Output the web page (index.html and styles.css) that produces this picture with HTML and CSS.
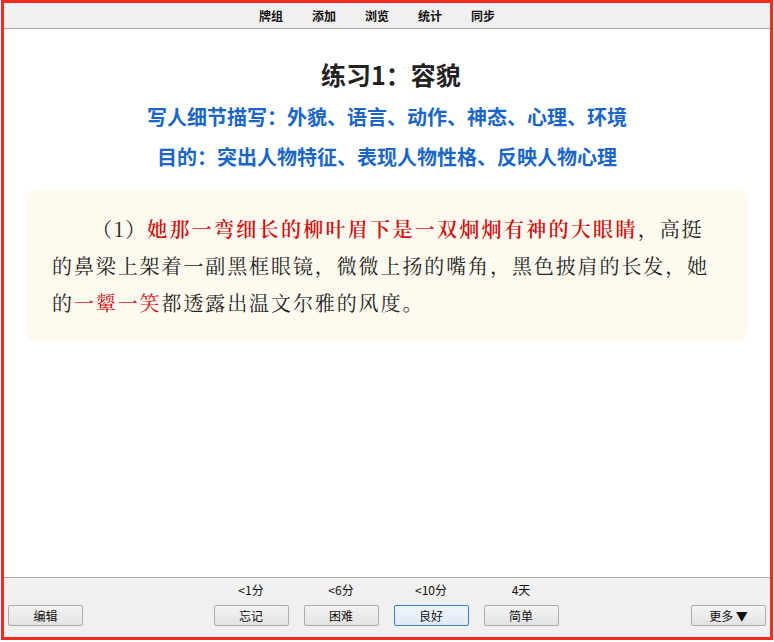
FILE: index.html
```html
<!DOCTYPE html>
<html lang="zh">
<head>
    <meta charset="UTF-8">
    <title>Anki</title>
    <link rel="stylesheet" href="styles.css">
</head>
<body>
    <div class="window">
        <div class="toolbar">
            <span>牌组</span>
            <span>添加</span>
            <span>浏览</span>
            <span>统计</span>
            <span>同步</span>
        </div>

        <div class="card">
            <h1>练习1：容貌</h1>
            <h2>写人细节描写：外貌、语言、动作、神态、心理、环境</h2>
            <h2>目的：突出人物特征、表现人物性格、反映人物心理</h2>
            <div class="passage">
                <p>（1）<b class="hl">她那一弯细长的柳叶眉下是一双炯炯有神的大眼睛</b>，高挺的鼻梁上架着一副黑框眼镜，微微上扬的嘴角，黑色披肩的长发，她的<span class="hl">一颦一笑</span>都透露出温文尔雅的风度。</p>
            </div>
        </div>

        <div class="bottombar">
            <div class="side">
                <button class="btn">编辑</button>
            </div>
            <div class="answers">
                <div class="answer">
                    <span class="due">&lt;1分</span>
                    <button class="btn">忘记</button>
                </div>
                <div class="answer">
                    <span class="due">&lt;6分</span>
                    <button class="btn">困难</button>
                </div>
                <div class="answer">
                    <span class="due">&lt;10分</span>
                    <button class="btn focus">良好</button>
                </div>
                <div class="answer">
                    <span class="due">4天</span>
                    <button class="btn">简单</button>
                </div>
            </div>
            <div class="side right">
                <button class="btn">更多 ▼</button>
            </div>
        </div>
    </div>
</body>
</html>
```

FILE: styles.css
```css
* {
    margin: 0;
    padding: 0;
    box-sizing: border-box;
}
html, body {
    height: 100%;
}
body {
    background-color: #fff;
    padding: 0 1px 2px 1px;
    font-family: "Liberation Sans", "Noto Sans CJK SC", sans-serif;
}
.window {
    height: 100%;
    border: 3px solid #ff2a1f;
    display: flex;
    flex-direction: column;
    background-color: #fff;
}
.toolbar {
    height: 26px;
    background-color: #f0f0f0;
    border-bottom: 1px solid #a8a8a8;
    display: flex;
    justify-content: center;
    align-items: center;
    gap: 29px;
    font-size: 12px;
    font-weight: bold;
    color: #111;
    padding-right: 20px;
}
.card {
    flex: 1;
    padding: 0 22px;
    text-align: center;
}
h1 {
    font-family: "Noto Sans CJK SC", sans-serif;
    font-size: 25px;
    font-weight: bold;
    color: #222;
    margin-top: 29px;
    line-height: 32px;
    padding-left: 8px;
}
h2 {
    font-family: "Noto Sans CJK SC", sans-serif;
    font-size: 20px;
    font-weight: bold;
    color: #1a66c8;
    line-height: 26px;
    margin-top: 14px;
}
h2 + h2 {
    margin-top: 14px;
}
.passage {
    margin-top: 19px;
    background-color: #fffaef;
    border-radius: 10px;
    padding: 21px 33px 20px 26px;
    text-align: left;
}
.passage p {
    font-family: "Noto Serif CJK SC", "Noto Sans CJK SC", serif;
    font-size: 20px;
    line-height: 37px;
    text-indent: 2em;
    color: #222;
    letter-spacing: 1.9px;
}
.hl {
    color: #d10f0f;
}
b.hl {
    font-weight: 600;
    letter-spacing: 2.3px;
}
.bottombar {
    height: 60px;
    background-color: #f0f0f0;
    border-top: 1px solid #a8a8a8;
    display: flex;
    align-items: flex-end;
    padding: 0 4px 11px 4px;
    font-family: "Noto Sans CJK SC", sans-serif;
}
.side {
    width: 200px;
}
.side.right {
    display: flex;
    justify-content: flex-end;
}
.answers {
    flex: 1;
    display: flex;
    justify-content: center;
    gap: 15px;
    padding-right: 2px;
}
.answer {
    display: flex;
    flex-direction: column;
    align-items: center;
    gap: 8px;
}
.due {
    font-size: 12px;
    line-height: 14px;
    color: #111;
}
.btn {
    width: 75px;
    height: 21px;
    font-family: "Noto Sans CJK SC", sans-serif;
    font-size: 12px;
    color: #111;
    background: linear-gradient(#f4f4f4, #e2e2e2);
    border: 1px solid #adadad;
    border-radius: 2px;
}
.btn.focus {
    border-color: #3c7fd6;
    background: linear-gradient(#eef4fb, #dfe9f5);
}
```
